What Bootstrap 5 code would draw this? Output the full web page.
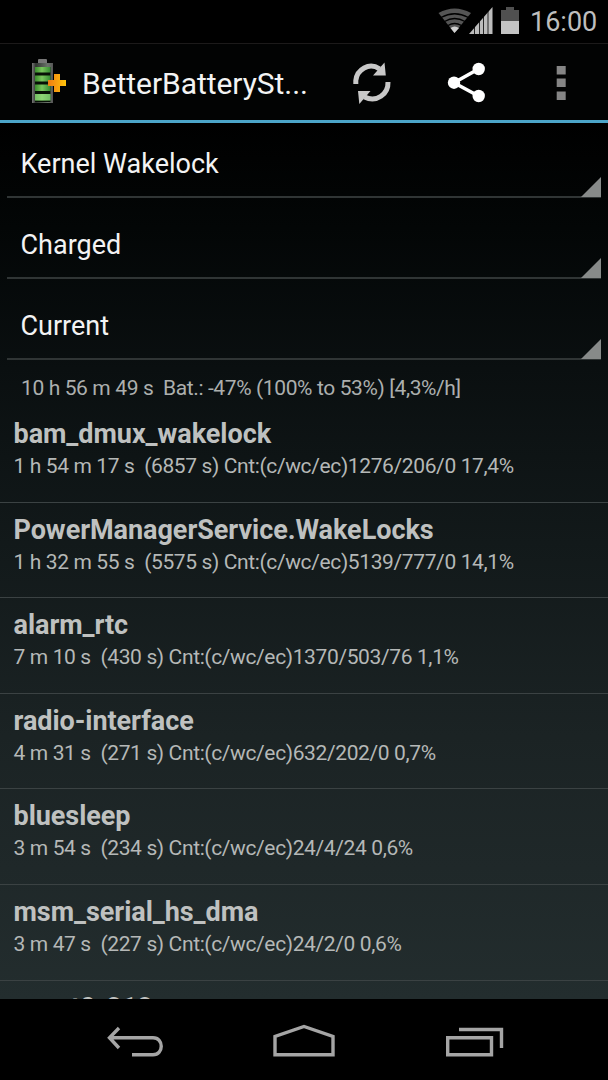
<!DOCTYPE html>
<html lang="en">
<head>
<meta charset="utf-8">
<meta name="viewport" content="width=device-width, initial-scale=1">
<title>BetterBatteryStats</title>
<link href="https://cdn.jsdelivr.net/npm/bootstrap@5.3.0/dist/css/bootstrap.min.css" rel="stylesheet">
<style>
body{font-family:Roboto,"Liberation Sans",sans-serif;background:#000;color:#f3f3f3;width:608px;height:1080px}
svg{display:block;flex:none}
.status-bar{height:43px;padding-right:10px}
.clock{font-size:27px;line-height:43px;color:#bebebe;width:67px;margin-left:9px;margin-right:1px;padding-top:2px;white-space:nowrap}
.action-bar{height:80px;border-top:1px solid #1c1a1a;border-bottom:3px solid #4ca5c9;background:#020303}
.app-title{font-size:30px;line-height:76px;width:230px;margin-left:14px;white-space:nowrap;padding-top:2px;letter-spacing:-.05px}
.content{height:876px;background:linear-gradient(#000 0,#030606 12%,#0a0f10 28%,#12191a 48%,#1b2324 70%,#232d2e 100%)}
.spinner-row{height:81px;margin:0 7px;padding:0 0 0 13.500px;border-bottom:2px solid #303535;font-size:27px;line-height:94px;position:relative}
.first-spinner{height:75px;line-height:83px}
.spinner-row::after{content:"";position:absolute;right:0;bottom:-1px;width:20px;height:20px;background:#878a89;clip-path:polygon(100% 0,100% 100%,0 100%)}
.summary{height:47px;padding-left:21px;font-size:21px;line-height:57px;color:#acafae;white-space:pre;letter-spacing:-.38px}
.wake-item{height:95.6px;padding:10px 14px 0 13.500px;border-bottom:1px solid #3b4243;background:none;border-radius:0;color:#bfc1c0;white-space:pre;flex:none}
.wake-name{font-size:27px;font-weight:700;line-height:34px;letter-spacing:-.05px}
.wake-stat{font-size:21px;line-height:31px;color:#b5b8b7;letter-spacing:-.375px}
.nav-keys{height:81px}
</style>
</head>
<body class="overflow-hidden">
<header class="status-bar d-flex align-items-center justify-content-end">
  <svg width="84" height="43" viewBox="438 0 84 43">
    <path d="M439.500 13Q455.500 4 472 13L455.500 33Z" fill="#555"/>
    <path d="M442 17.500Q455.500 10 469.500 17.500M445.500 21.500Q455.500 15.500 466 21.500M449 25.500Q455.500 21.500 462.500 25.500" fill="none" stroke="#000" stroke-width="1.300"/>
    <path d="M451.500 28Q455.500 25 460 28L455.500 33Z" fill="#d0d0d0"/>
    <path d="M470 34L493.500 7V34Z" fill="#bcbcbc"/>
    <path d="M475.500 26V34M480.500 20V34M484.500 15V34M489 10V34" stroke="#000" stroke-width=".8"/>
    <path d="M502 10H507V7H515V10H520V21H502Z" fill="#505050"/>
    <path d="M502 21H520V34H502Z" fill="#c3c3c3"/>
  </svg>
  <div class="clock">16:00</div>
</header>
<nav class="action-bar d-flex">
  <svg width="68" height="76" viewBox="0 44 68 76">
    <defs>
      <linearGradient id="metal"><stop stop-color="#777"/><stop offset=".18" stop-color="#303530"/><stop offset=".75" stop-color="#6b746b"/><stop offset="1" stop-color="#555"/></linearGradient>
      <linearGradient id="cell"><stop stop-color="#398c2c"/><stop offset=".45" stop-color="#79c65c"/><stop offset="1" stop-color="#358b33"/></linearGradient>
      <linearGradient id="gold"><stop stop-color="#f07c12"/><stop offset="1" stop-color="#ffc40b"/></linearGradient>
    </defs>
    <rect x="38" y="59" width="9" height="5" rx="1" fill="#777"/>
    <path d="M32 63H53V103H32Z" fill="url(#metal)"/>
    <path d="M35 67H50.500V102H35Z" fill="#071006"/>
    <path d="M35 67H50.500V72.500H35ZM35 75.500H50.500V81.500H35ZM35 84.500H50.500V91H35ZM35 94H50.500V100.500H35Z" fill="url(#cell)"/>
    <path d="M35 94H50.500V100.500H35Z" fill="#9be087" opacity=".6"/>
    <path d="M54 74H60V80H66V86H60V92H54V86H48V80H54Z" fill="url(#gold)"/>
  </svg>
  <div class="app-title">BetterBatterySt...</div>
  <svg class="ms-auto" width="268" height="76" viewBox="340 44 268 76">
    <path d="M355.800 84V80.500C357 69.500 369 62 379.500 68.800M388 82C388.500 94 376.500 103 364.500 97" fill="none" stroke="#c8c8c8" stroke-width="5"/>
    <path d="M384.500 62.500L385.800 75.500H373ZM358 91H370.500L359.300 104Z" fill="#c8c8c8"/>
    <path d="M478.500 69L454 82.700L478.500 96" fill="none" stroke="#fff" stroke-width="3.500"/>
    <g fill="#fff"><circle cx="478.700" cy="69" r="6.200"/><circle cx="454" cy="82.700" r="6.200"/><circle cx="478.700" cy="96" r="6.200"/></g>
    <path d="M556.700 66H565.700V74.500H556.700ZM556.700 78.500H565.700V87H556.700ZM556.700 91.500H565.700V100H556.700Z" fill="#858585"/>
  </svg>
</nav>
<main class="content overflow-hidden d-flex flex-column">
  <div class="spinner-row first-spinner flex-shrink-0">Kernel Wakelock</div>
  <div class="spinner-row flex-shrink-0">Charged</div>
  <div class="spinner-row flex-shrink-0">Current</div>
  <div class="summary flex-shrink-0">10 h 56 m 49 s  Bat.: -47% (100% to 53%) [4,3%/h]</div>
  <section class="list-group list-group-flush rounded-0">
    <div class="wake-item"><div class="wake-name">bam_dmux_wakelock</div><div class="wake-stat">1 h 54 m 17 s  (6857 s) Cnt:(c/wc/ec)1276/206/0 17,4%</div></div>
    <div class="wake-item"><div class="wake-name">PowerManagerService.WakeLocks</div><div class="wake-stat">1 h 32 m 55 s  (5575 s) Cnt:(c/wc/ec)5139/777/0 14,1%</div></div>
    <div class="wake-item"><div class="wake-name">alarm_rtc</div><div class="wake-stat">7 m 10 s  (430 s) Cnt:(c/wc/ec)1370/503/76 1,1%</div></div>
    <div class="wake-item"><div class="wake-name">radio-interface</div><div class="wake-stat">4 m 31 s  (271 s) Cnt:(c/wc/ec)632/202/0 0,7%</div></div>
    <div class="wake-item"><div class="wake-name">bluesleep</div><div class="wake-stat">3 m 54 s  (234 s) Cnt:(c/wc/ec)24/4/24 0,6%</div></div>
    <div class="wake-item"><div class="wake-name">msm_serial_hs_dma</div><div class="wake-stat">3 m 47 s  (227 s) Cnt:(c/wc/ec)24/2/0 0,6%</div></div>
    <div class="wake-item"><div class="wake-name">event0-218</div></div>
  </section>
</main>
<footer class="nav-keys d-flex justify-content-center">
  <svg width="608" height="81" viewBox="0 999 608 81" fill="none" stroke="#a5a5a5" stroke-width="3.400">
    <path d="M119 1028L109.500 1037.700L119 1048M110 1037.700H153C164 1037.700 164 1054.700 153 1054.700H132"/>
    <path d="M275 1054.700V1036.500L304 1026.500L333 1036.500V1054.700Z"/>
    <path d="M447.700 1037.700H491.500V1054.700H447.700ZM459 1029.500H501.500V1048"/>
  </svg>
</footer>
<script src="https://cdn.jsdelivr.net/npm/bootstrap@5.3.0/dist/js/bootstrap.bundle.min.js"></script>
</body>
</html>
